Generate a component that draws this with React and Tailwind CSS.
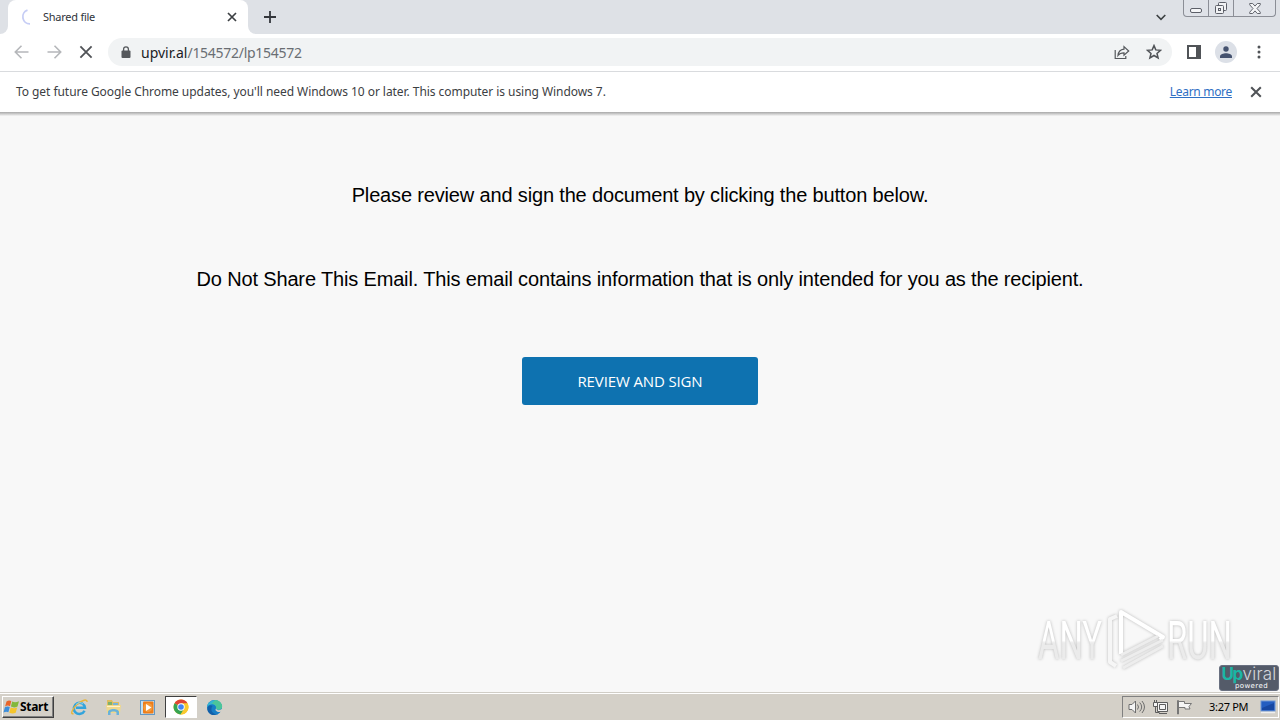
import { useState } from "react"

const uiFont = "font-['Noto_Sans','Open_Sans',sans-serif]"

function Cross({ size, color, width }) {
  return (
    <svg width={size} height={size} viewBox="0 0 10 10" stroke={color} strokeWidth={width} fill="none">
      <path d="M1 1l8 8M9 1L1 9" />
    </svg>
  )
}

function WindowButtons() {
  return (
    <div className="flex h-[17px] w-[93px] rounded-b-[4px] border border-t-0 border-[#8b8e96] bg-[#dfe2e8]">
      <div className="flex w-[25px] items-end justify-center border-r border-[#8b8e96] pb-[3px]">
        <div className="h-[5px] w-[12px] rounded-[2px] border border-[#5c5f68] bg-[#f4f5f7]" />
      </div>
      <div className="flex w-[25px] justify-center border-r border-[#8b8e96] pt-[2px]">
        <svg width="14" height="13" viewBox="0 0 14 13" fill="#f1f2f4" stroke="#5c5f68">
          <rect x="4.500" y="0.500" width="8" height="8" rx="1" />
          <rect x="1.500" y="3.500" width="8" height="8" rx="1" />
          <rect x="4.500" y="6.500" width="2" height="2" />
        </svg>
      </div>
      <div className="flex flex-1 justify-center pt-[3px]">
        <svg width="12" height="11" viewBox="0 0 12 11" fill="#f4f5f7" stroke="#62656d">
          <path d="M.7.5h3L6 3.100 8.300.5h3v1.300L8 5.500l3.300 3.700v1.300h-3L6 7.900 3.700 10.500h-3V9.200L4 5.500.7 1.800z" />
        </svg>
      </div>
    </div>
  )
}

function TabStrip({ title }) {
  return (
    <div className="flex h-[34px] items-start bg-[#dee1e6]">
      <div className="h-[34px] w-[8px] bg-white">
        <div className="h-full rounded-br-[8px] bg-[#dee1e6]" />
      </div>
      <div className="flex h-[34px] w-[240px] items-center rounded-t-[8px] bg-white pl-[12px]">
        <svg width="16" height="16" viewBox="0 0 16 16" fill="none" stroke="#c6cdf5" strokeWidth="1.800">
          <path d="M10 14.800A7 7 0 0 1 7.500 1.200" />
        </svg>
        <span className="ml-[7px] w-[184px] text-[11px] leading-4 tracking-[-0.25px] text-[#30343a]">{title}</span>
        <Cross size={10} color="#3c4043" width={1.7} />
      </div>
      <div className="h-[34px] w-[8px] bg-white">
        <div className="h-full rounded-bl-[8px] bg-[#dee1e6]" />
      </div>
      <svg className="ml-[8px] mt-[11px]" width="12" height="12" viewBox="0 0 12 12" stroke="#34373c" strokeWidth="1.800">
        <path d="M6 0v12M0 6h12" />
      </svg>
      <div className="flex-1" />
      <svg className="mr-[17px] mt-[14px]" width="10" height="7" viewBox="0 0 10 7" fill="none" stroke="#3c4043" strokeWidth="1.600">
        <path d="M.7 1L5 5.300 9.300 1" />
      </svg>
      <WindowButtons />
      <div className="w-[4px]" />
    </div>
  )
}

function Toolbar() {
  return (
    <div className="flex h-[38px] items-center border-b border-[#d9dbde] bg-white pb-px pl-[14px]">
      <svg width="15" height="14" viewBox="0 0 15 14" fill="none" stroke="#b5b7ba" strokeWidth="1.600">
        <path d="M14.500 7H1.500M7.500.8L1.300 7l6.200 6.200" />
      </svg>
      <svg className="ml-[18px]" width="15" height="14" viewBox="0 0 15 14" fill="none" stroke="#b5b7ba" strokeWidth="1.600">
        <path d="M.5 7h13M7.500.8L13.700 7l-6.200 6.200" />
      </svg>
      <div className="ml-[17px]">
        <Cross size={14} color="#505357" width={1.3} />
      </div>
      <div className="ml-[15px] flex h-[28px] w-[1064px] items-center rounded-full bg-[#f1f3f4] pl-[13px] pr-[10px]">
        <svg width="10" height="13" viewBox="0 0 10 13">
          <rect x="0.500" y="4.500" width="9" height="7.500" rx="1" fill="#55585c" />
          <path d="M2.600 5V3.200a2.400 2.400 0 0 1 4.800 0V5" fill="none" stroke="#55585c" strokeWidth="1.300" />
        </svg>
        <span className="ml-[10px] flex-1 pt-px text-[14px] leading-5 tracking-[-0.28px] text-[#6a6e73]">
          <span className="tracking-[0px] text-[#202124]">upvir.al</span>/154572/lp154572
        </span>
        <svg width="16" height="15" viewBox="0 0 16 15" fill="none" stroke="#55585c" strokeWidth="1.200">
          <path d="M1.200 5v8.500h10.600V11M10 1.600L14.700 6 10 10.200V7.800C7.300 7.800 5.400 8.500 4 10.400 4.300 7.200 6.200 4.700 10 4.200z" />
        </svg>
        <svg className="ml-[16px]" width="16" height="16" viewBox="0 0 16 16" fill="none" stroke="#505357" strokeWidth="1.500">
          <path d="M8 1.600l1.800 4.300 4.700.4L11 9.400l1.100 4.600L8 11.500 3.900 14 5 9.400 1.500 6.300l4.700-.4z" />
        </svg>
      </div>
      <svg className="ml-[15px]" width="14" height="14" viewBox="0 0 14 14">
        <path d="M1 1h12v12H1z" fill="none" stroke="#505357" strokeWidth="2" />
        <path d="M9 0h5v14H9z" fill="#505357" />
      </svg>
      <div className="ml-[14px] flex h-[22px] w-[22px] items-center justify-center rounded-full bg-[#dce0e7]">
        <svg width="12" height="12" viewBox="0 0 12 12" fill="#45526f">
          <circle cx="6" cy="3" r="2.700" />
          <path d="M0 12v-1.700C0 8.300 3.500 7.200 6 7.200s6 1.100 6 3.100V12z" />
        </svg>
      </div>
      <svg className="ml-[20px]" width="4" height="14" viewBox="0 0 4 14" fill="#505357">
        <circle cx="2" cy="2" r="1.500" />
        <circle cx="2" cy="7" r="1.500" />
        <circle cx="2" cy="12" r="1.500" />
      </svg>
    </div>
  )
}

function InfoBar({ onClose }) {
  return (
    <div className="flex h-[40px] items-center bg-white pl-[16px] pr-[18px]">
      <span className="whitespace-nowrap text-[12px] leading-4 tracking-[-0.055px] text-[#3c4043]">
        To get future Google Chrome updates, you'll need Windows 10 or later. This computer is using Windows 7.
      </span>
      <a className="ml-auto text-[12px] leading-4 tracking-[-0.3px] text-[#2f70c4] underline" href="#">Learn more</a>
      <button className="ml-[18px]" onClick={onClose}>
        <Cross size={12} color="#505357" width={1.7} />
      </button>
    </div>
  )
}

function Watermark() {
  return (
    <div className="absolute right-[45px] top-[496px] drop-shadow-[0_0_1.5px_#b8b8b8]">
      <svg className="overflow-visible" width="198" height="66" viewBox="0 0 198 66">
        <defs>
          <linearGradient id="letters" gradientUnits="userSpaceOnUse" x1="0" y1="13" x2="0" y2="52">
            <stop offset="0.500" stopColor="#ffffff" />
            <stop offset="0.560" stopColor="#ebebeb" />
          </linearGradient>
        </defs>
        <g fill="url(#letters)" fontFamily="Roboto, sans-serif" fontSize="53">
          <text x="1" y="51" textLength="64" lengthAdjust="spacingAndGlyphs">ANY</text>
          <text x="130" y="51" textLength="65" lengthAdjust="spacingAndGlyphs">RUN</text>
        </g>
        <g fill="none" strokeWidth="4" strokeLinejoin="round">
          <path d="M80 8l-7 3v43l6 4" stroke="#f6f6f6" />
          <path d="M84 46V4l42 25-3 3" stroke="#ffffff" />
          <path d="M84 47l37-19M84 53l42-21M86 60l40-22" stroke="#ededed" strokeWidth="3" />
        </g>
      </svg>
    </div>
  )
}

function UpviralBadge() {
  return (
    <div className="absolute bottom-[1px] right-[1px] h-[26px] w-[60px] rounded-[3px] border border-[#697080] bg-[#545b69] font-['Inter',sans-serif]">
      <div className="flex h-[17px] items-center justify-center text-[17px] leading-[17px]">
        <span className="w-[21px] text-[17px] font-bold tracking-[-1.5px] text-[#1bb6a5]">Up</span>
        <span className="font-light tracking-[0.2px] text-[#d4d7dc]">viral</span>
      </div>
      <div className="pl-[5px] text-center font-['DejaVu_Sans',sans-serif] text-[7px] leading-[7px] tracking-[0.4px] text-white">powered</div>
    </div>
  )
}

function Page() {
  return (
    <main className="relative h-[580px] bg-[#f8f8f8] font-['Liberation_Sans',Arial,sans-serif]">
      <div className="h-[4px] bg-linear-to-b from-[#a8a8a8] to-[#f5f5f5]" />
      <div className="flex flex-col items-center pt-[67px] text-[20px] leading-6 text-black">
        <p className="whitespace-nowrap tracking-[-0.16px]">Please review and sign the document by clicking the button below.</p>
        <p className="mt-[60px] whitespace-nowrap tracking-[-0.155px]">
          Do Not Share This Email. This email contains information that is only intended for you as the recipient.
        </p>
        <button className="mt-[66px] h-[48px] w-[236px] rounded-[3px] bg-[#0e72b0] font-['Open_Sans',sans-serif] text-[15px] tracking-[-0.13px] text-white">
          REVIEW AND SIGN
        </button>
      </div>
      <Watermark />
      <UpviralBadge />
    </main>
  )
}

function WindowsFlag() {
  return (
    <svg width="17" height="16" viewBox="0 0 17 16">
      <path d="M3.500 2.500C5.500 1 7 1.300 8.300 2.100L7 7.200C5.400 6.400 4 6.400 2.100 7.400z" fill="#e8652b" />
      <path d="M9.200 2.500c2 1 4 1 6.800-.3l-1.500 5.300C12 8.700 10 8.600 7.900 7.600z" fill="#82b83b" />
      <path d="M1.900 8.300c1.800-1 3.300-1 4.900-.2l-1.400 5.100C4 12.400 2.300 12.400.5 13.500z" fill="#3c8edb" />
      <path d="M7.700 8.500c2.200 1 4.100 1.100 6.500.1l-1.500 5.200c-2.300 1-4.300.9-6.400-.1z" fill="#f5c52c" />
    </svg>
  )
}

function ExplorerIcon() {
  return (
    <svg width="17" height="17" viewBox="0 0 17 17" fill="none">
      <path d="M13.500 11.700A5.600 5.600 0 1 1 14 8.800H5" stroke="#33a4dc" strokeWidth="2.500" />
      <path d="M2.500 14.500C-1 16 1 10 6 5.500S16.500-.5 16 3" stroke="#e8b53b" strokeWidth="1.400" />
      <path d="M5 5.500Q8.500 2 12 5" stroke="#8bd5f5" />
    </svg>
  )
}

function FolderIcon() {
  return (
    <svg width="17" height="17" viewBox="0 0 17 17">
      <path d="M2 1h5l1 2h6v11H2z" fill="#dfbd5e" />
      <path d="M3 3h4v3H3z" fill="#7fb16b" />
      <path d="M8 4h5v2H8z" fill="#78b4d8" />
      <path d="M1 6h15l-1 8H2z" fill="#f0d88c" />
      <path d="M3 16v-3c0-4 11-4 11 0v3h-2.500v-2.500c0-1.500-6-1.500-6 0V16z" fill="#69b2da" />
      <path d="M2 7.500h13" stroke="#fff3c9" />
    </svg>
  )
}

function PlayerIcon() {
  return (
    <svg width="17" height="17" viewBox="0 0 17 17">
      <rect x="1.500" y="1.500" width="14" height="14" fill="#c4dff0" stroke="#6399c5" />
      <rect x="4" y="2.500" width="10.500" height="12" rx="1" fill="#ef7d18" />
      <circle cx="9" cy="8.500" r="4.500" fill="#f39a3c" />
      <path d="M7 5l5.500 3.500L7 12z" fill="#fff" />
    </svg>
  )
}

function ChromeIcon() {
  return (
    <svg width="16" height="16" viewBox="0 0 16 16">
      <circle cx="8" cy="8" r="7.500" fill="#f9c92e" />
      <path d="M8 8L1.500 4.300A7.500 7.500 0 0 1 14.500 4.300z" fill="#df4535" />
      <path d="M8 8L1.500 4.300A7.500 7.500 0 0 0 7.600 15.500L11.300 9.800z" fill="#36a452" />
      <path d="M8 4.300h6.500A7.500 7.500 0 0 1 7.600 15.500L11.300 9.800z" fill="#f9c92e" />
      <circle cx="8" cy="8" r="3.700" fill="#fff" />
      <circle cx="8" cy="8" r="2.800" fill="#4285f4" />
    </svg>
  )
}

function EdgeIcon() {
  return (
    <svg width="17" height="17" viewBox="0 0 17 17">
      <circle cx="8.500" cy="8.500" r="7.500" fill="#177ec6" />
      <path d="M1 8C2-.5 14-1 16 7c.5 4-5 5-6 2.500C11 5 4.500 3.500 1 8z" fill="#35b6d3" />
      <path d="M9 1c5 0 8 4.500 7 7.500-1 3-5 2.500-6 1 1.200-3-2-4.800-4.500-4.500" fill="#4cc59a" />
      <path d="M6.500 7C3.500 11 7 16 12 15c-8 4-13-4-9.500-8 1.300-1 3-1 4 0z" fill="#1260a9" />
      <path d="M10 9.500c1 2.300 4 2 6 .5v2c-1 1-3.500 1.500-5 .5S9 11 10 9.500z" fill="#d4d0c8" />
    </svg>
  )
}

function Tray() {
  return (
    <div className="ml-auto flex h-[22px] w-[157px] items-center border border-[#808080] border-b-white border-r-white pl-[5px]">
      <svg width="18" height="16" viewBox="0 0 18 16" fill="#f5f5f5" stroke="#6d6d6d">
        <path d="M1 5.500h3L7.500 2v12L4 10.500H1z" />
        <path d="M9.500 5.500q2 2.500 0 5M11.700 3.500q4 4.500 0 9M14 2q5 6 0 12" fill="none" />
      </svg>
      <svg className="ml-[6px]" width="17" height="16" viewBox="0 0 17 16" fill="#f4f4f4" stroke="#5d5d5d">
        <path d="M5.500 3.500h10v9h-10zM7.500 5.500h6v5h-6zM7 14.500h8M1.500 3.500h4v4h-4zM2.500 1v2M4.500 1v2" />
        <path d="M3.500 7.500v6h4" fill="none" />
      </svg>
      <svg className="ml-[7px]" width="17" height="16" viewBox="0 0 17 16" fill="#f5f5f5" stroke="#777777">
        <path d="M1.500 15V1.500h1V15zM2.500 2.500h6v2h7l-2.500 3 1 2.500h-5V8.500H2.500z" />
      </svg>
      <span className="ml-[16px] w-[43px] whitespace-nowrap text-[11px] leading-4 tracking-[-0.3px] text-black">3:27 PM</span>
      <svg className="ml-[8px]" width="16" height="14" viewBox="0 0 16 14">
        <rect x="1" y="1" width="14" height="10" fill="#245dc0" stroke="#6a94d4" />
        <path d="M2 8l12-5v7H2z" fill="#1747a2" />
        <path d="M1 12.500h14" stroke="#eeeeee" strokeWidth="1.500" />
      </svg>
    </div>
  )
}

function Taskbar() {
  return (
    <footer className="flex h-[28px] items-center border-t border-[#d0cdc6] bg-[#d4d0c8] pl-[2px] pr-[1px] pt-px shadow-[inset_0_1px_0_#ffffff]">
      <button className="flex h-[22px] w-[52px] items-center border border-[#404040] border-l-white border-t-white shadow-[inset_-1px_-1px_0_#808080]">
        <WindowsFlag />
        <span className="text-[12px] font-bold leading-4 tracking-[-0.3px] text-black">Start</span>
      </button>
      <div className="ml-[17px] flex w-[85px] justify-between">
        <ExplorerIcon />
        <FolderIcon />
        <PlayerIcon />
      </div>
      <div className="ml-[9px] flex h-[22px] w-[32px] items-center justify-center border border-[#404040] border-b-white border-r-white bg-white">
        <ChromeIcon />
      </div>
      <div className="ml-[9px]">
        <EdgeIcon />
      </div>
      <Tray />
    </footer>
  )
}

export default function App() {
  const [showInfo, setShowInfo] = useState(true)

  return (
    <div className={`flex h-[720px] w-[1280px] flex-col overflow-hidden bg-[#f8f8f8] ${uiFont}`}>
      <TabStrip title="Shared file" />
      <Toolbar />
      {showInfo && <InfoBar onClose={() => setShowInfo(false)} />}
      <Page />
      <Taskbar />
    </div>
  )
}
